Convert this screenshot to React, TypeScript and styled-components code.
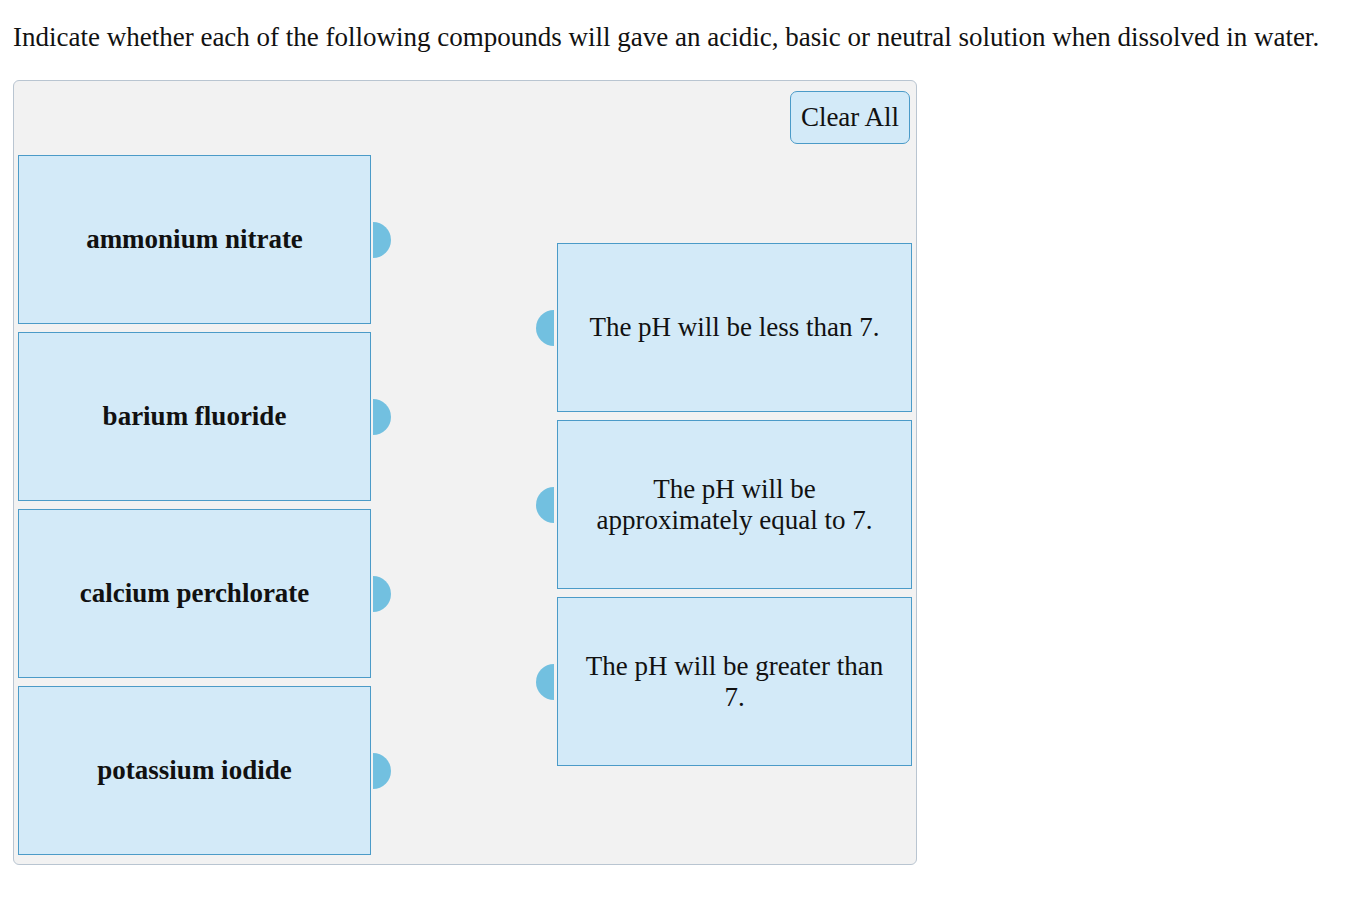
import styled, { createGlobalStyle } from 'styled-components';

const GlobalStyle = createGlobalStyle`
  body {
    margin: 8px;
    background: #ffffff;
    font-family: "Liberation Serif", "Times New Roman", serif;
    color: #111111;
  }
`;

const leftItems = ['ammonium nitrate', 'barium fluoride', 'calcium perchlorate', 'potassium iodide'];

const rightItems = [
  'The pH will be less than 7.',
  'The pH will be approximately equal to 7.',
  'The pH will be greater than 7.',
];

const App = () => {
  return (
    <StyledPage>
      <GlobalStyle />
      <StyledPrompt>
        Indicate whether each of the following compounds will gave an acidic, basic or neutral solution
        when dissolved in water.
      </StyledPrompt>
      <StyledPanel>
        <StyledToolbar>
          <StyledClearButton type="button">Clear All</StyledClearButton>
        </StyledToolbar>
        <StyledColumns>
          <StyledColumn>
            {leftItems.map((x) => (
              <StyledItem key={x} side="left">
                <StyledItemLabel bold>{x}</StyledItemLabel>
              </StyledItem>
            ))}
          </StyledColumn>
          <StyledTargetColumn>
            {rightItems.map((x) => (
              <StyledItem key={x} side="right">
                <StyledItemLabel>{x}</StyledItemLabel>
              </StyledItem>
            ))}
          </StyledTargetColumn>
        </StyledColumns>
      </StyledPanel>
    </StyledPage>
  );
};

export default App;

const StyledPage = styled.div`
  padding: 0 5px;
`;

const StyledPrompt = styled.p`
  margin: 14px 0 27px;
  font-size: 27px;
  line-height: 31px;
  white-space: nowrap;
`;

const StyledPanel = styled.div`
  width: 904px;
  box-sizing: border-box;
  background-color: #f2f2f2;
  border: 1px solid #b9c5d1;
  border-radius: 6px;
  padding: 10px 4px 9px;
`;

const StyledToolbar = styled.div`
  display: flex;
  justify-content: flex-end;
  padding-right: 2px;
`;

const StyledClearButton = styled.button`
  font-family: "Liberation Serif", "Times New Roman", serif;
  font-size: 27px;
  color: #111111;
  background-color: #d3eaf8;
  border: 1px solid #4b9bc8;
  border-radius: 7px;
  height: 53px;
  width: 120px;
  padding: 0;
  cursor: pointer;
`;

const StyledColumns = styled.div`
  display: flex;
  justify-content: space-between;
  margin-top: 11px;
`;

const StyledColumn = styled.div`
  display: flex;
  flex-direction: column;
  gap: 8px;
`;

const StyledTargetColumn = styled(StyledColumn)`
  padding-top: 88px;
`;

const StyledItem = styled.div<{ side: 'left' | 'right' }>`
  position: relative;
  box-sizing: border-box;
  width: ${(p) => (p.side === 'left' ? '353px' : '355px')};
  height: 169px;
  background-color: #d3eaf8;
  border: 1px solid #4b9bc8;
  display: flex;
  align-items: center;
  justify-content: center;
  padding: 0 22px;
  text-align: center;

  &::after {
    content: '';
    position: absolute;
    top: 50%;
    width: 18px;
    height: 36px;
    margin-top: -18px;
    background-color: #72c0e0;
    ${(p) =>
      p.side === 'left'
        ? 'right: -21px; border-radius: 0 18px 18px 0;'
        : 'left: -22px; border-radius: 18px 0 0 18px;'}
  }
`;

const StyledItemLabel = styled.span<{ bold?: boolean }>`
  font-size: 27px;
  line-height: 31px;
  font-weight: ${(p) => (p.bold ? 700 : 400)};
`;
